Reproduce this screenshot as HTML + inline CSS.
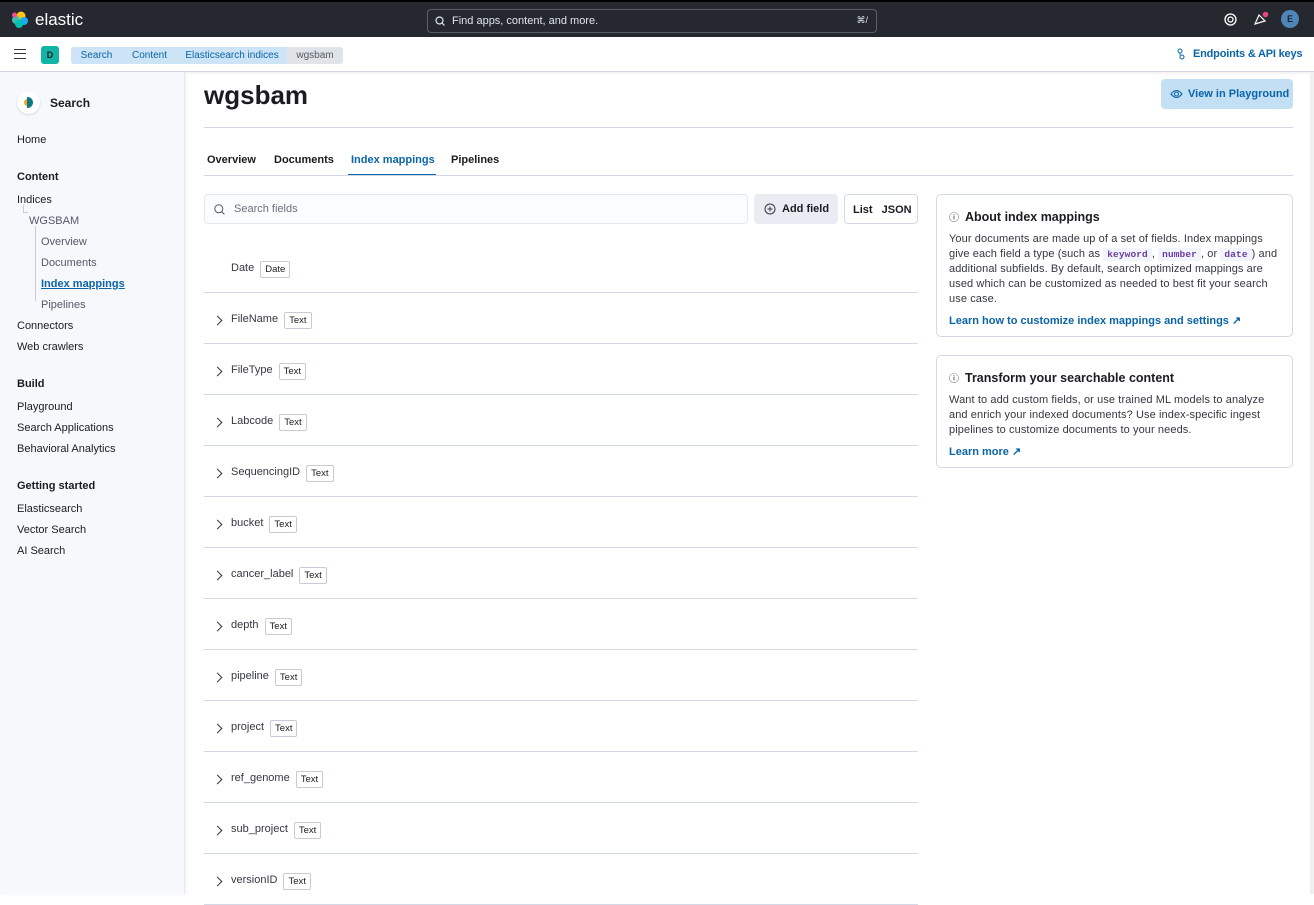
<!DOCTYPE html>
<html><head><meta charset="utf-8"><style>
*{box-sizing:border-box;margin:0;padding:0}
body{width:1314px;height:894px;overflow:hidden;font-family:"Liberation Sans",sans-serif;background:#fff;color:#1a1c21;position:relative;font-size:11px}
.top{position:absolute;left:0;top:0;width:1314px;height:37px;background:#25282f;border-top:2px solid #000}
.logo{position:absolute;left:11px;top:8px;display:flex;align-items:center;color:#fff;font-size:17px}
.search{position:absolute;left:427px;top:7px;width:450px;height:24px;border:1px solid #5a5e66;border-radius:4px;color:#dfe5ef;font-size:11px;padding:5px 0 0 24px}
.bc{position:absolute;left:0;top:37px;width:1314px;height:35px;background:#fff;border-bottom:1px solid #d3dae6;box-shadow:0 1px 3px rgba(0,0,0,.08)}
.crumb{position:absolute;top:10px;height:17px;font-size:10px;color:#0b64a8;background:#cce4f5;padding:3px 0 0 0;text-align:center}
.side{position:absolute;left:0;top:72px;width:185px;height:822px;background:#f7f8fc;border-right:1px solid #e3e8f0;box-shadow:1px 0 4px rgba(0,0,0,.06)}
.side div{position:absolute;font-size:11px;color:#1a1c21}
.side .h{font-weight:bold}
.side .sub{color:#535966}
.main{position:absolute;left:204px}
.row{position:absolute;left:204px;width:714px;height:51px;border-bottom:1px solid #d3dae6}
.row .n{position:absolute;left:27px;top:19px;font-size:11px;color:#343741}
.badge{display:inline-block;border:1px solid #c6ccd6;border-radius:2px;font-size:9.5px;padding:2px 4px;margin-left:6px;color:#1a1c21;vertical-align:-1px}
.chev{position:absolute;left:10px;top:24px;width:7px;height:7px;border-right:1.3px solid #343741;border-top:1.3px solid #343741;transform:rotate(45deg)}
.card{position:absolute;left:936px;width:357px;border:1px solid #d3dae6;border-radius:5px;padding:14px 14px 0 12px}
.card h3{font-size:12.5px;margin-bottom:8px}
.card p{font-size:11px;line-height:15px;color:#343741;letter-spacing:.1px}
.card a{display:block;color:#0b64a8;font-size:11px;font-weight:bold;margin-top:7px;text-decoration:none}
code{font-family:"Liberation Mono",monospace;font-size:9.5px;color:#6b3c9f;background:#f1f4fa;padding:1px 4px;font-weight:bold}
.tab{position:absolute;top:154px;font-size:11px;font-weight:bold}
</style></head><body>
<div class="top">
 <div class="logo"><svg width="18" height="18" viewBox="0 0 18 18"><circle cx="10" cy="5" r="4.5" fill="#fec514"/><circle cx="5" cy="9" r="4" fill="#3ebeb0"/><circle cx="13" cy="10" r="4" fill="#1ba9f5"/><circle cx="8" cy="13" r="4" fill="#00bfb3"/><circle cx="3.5" cy="4" r="2.5" fill="#f04e98"/></svg><span style="margin-left:6px">elastic</span></div>
 <div class="search"><svg style="position:absolute;left:7px;top:6px" width="10" height="10" viewBox="0 0 10 10"><circle cx="4.5" cy="4.5" r="3.5" fill="none" stroke="#dfe5ef" stroke-width="1.2"/><path d="M7 7l2.5 2.5" stroke="#dfe5ef" stroke-width="1.2"/></svg>Find apps, content, and more.<span style="position:absolute;right:8px;top:5px;font-size:9px">⌘/</span></div>
 <svg style="position:absolute;left:1224px;top:11px" width="13" height="13" viewBox="0 0 13 13"><circle cx="6.5" cy="6.5" r="5.5" fill="none" stroke="#fff" stroke-width="1.3"/><circle cx="6.5" cy="6.5" r="2.5" fill="none" stroke="#fff" stroke-width="1.3"/></svg>
 <svg style="position:absolute;left:1253px;top:9px" width="16" height="16" viewBox="0 0 16 16"><path d="M2 13L6 4l6 6z" fill="none" stroke="#fff" stroke-width="1.2"/><circle cx="12.5" cy="3.5" r="2.8" fill="#e2467b"/></svg>
 <div style="position:absolute;left:1281px;top:8px;width:18px;height:18px;border-radius:50%;background:#4e86b8;color:#000;font-size:9px;text-align:center;line-height:18px">E</div>
</div>
<div class="bc">
 <div style="position:absolute;left:14px;top:12px;width:12px;height:10px;border-top:1.5px solid #343741;border-bottom:1.5px solid #343741"><div style="margin-top:3px;border-top:1.5px solid #343741"></div></div>
 <div style="position:absolute;left:41px;top:9px;width:18px;height:18px;border-radius:3px;background:#12b5a5;font-size:9px;font-weight:bold;text-align:center;line-height:18px">D</div>
 <div class="crumb" style="left:71px;width:51px;border-radius:3px 0 0 3px">Search</div>
 <div class="crumb" style="left:122px;width:55px">Content</div>
 <div class="crumb" style="left:177px;width:110px">Elasticsearch indices</div>
 <div class="crumb" style="left:287px;width:56px;background:#e0e3e8;color:#535966;border-radius:0 3px 3px 0">wgsbam</div>
 <div style="position:absolute;left:1193px;top:11px;font-size:11px;font-weight:bold;color:#0b64a8;letter-spacing:-.2px">Endpoints &amp; API keys</div>
 <svg style="position:absolute;left:1176px;top:11px" width="10" height="13" viewBox="0 0 10 13"><circle cx="4" cy="3" r="2" fill="none" stroke="#0b64a8"/><circle cx="6" cy="9" r="2" fill="none" stroke="#0b64a8"/><path d="M4 5v2M6 7v0" stroke="#0b64a8"/></svg>
</div>
<div class="side">
 <div style="left:17px;top:19px;width:23px;height:23px;border-radius:50%;background:#fff;box-shadow:0 1px 2px rgba(0,0,0,.15)"><span style="position:absolute;left:7px;top:8px;width:7px;height:7px;border-radius:50%;background:#f6a623"></span><span style="position:absolute;left:10px;top:6px;width:6px;height:11px;border-radius:0 6px 6px 0;background:#0b7a82"></span></div>
 <div class="h" style="left:50px;top:24px;font-size:12px">Search</div>
 <div style="left:17px;top:62px">Home</div>
 <div class="h" style="left:17px;top:99px">Content</div>
 <div style="left:17px;top:122px">Indices</div>
 <div style="left:23px;top:133px;width:5px;height:8px;border-left:1px solid #c6ccd6;border-bottom:1px solid #c6ccd6"></div>
 <div class="sub" style="left:29px;top:143px">WGSBAM</div>
 <div style="left:35px;top:154px;width:1px;height:75px;background:#c6ccd6"></div>
 <div class="sub" style="left:41px;top:164px">Overview</div>
 <div class="sub" style="left:41px;top:185px">Documents</div>
 <div style="left:41px;top:206px;color:#0b64a8;font-weight:bold;text-decoration:underline">Index mappings</div>
 <div class="sub" style="left:41px;top:227px">Pipelines</div>
 <div style="left:17px;top:248px">Connectors</div>
 <div style="left:17px;top:269px">Web crawlers</div>
 <div class="h" style="left:17px;top:306px">Build</div>
 <div style="left:17px;top:329px">Playground</div>
 <div style="left:17px;top:350px">Search Applications</div>
 <div style="left:17px;top:371px">Behavioral Analytics</div>
 <div class="h" style="left:17px;top:408px">Getting started</div>
 <div style="left:17px;top:431px">Elasticsearch</div>
 <div style="left:17px;top:452px">Vector Search</div>
 <div style="left:17px;top:473px">AI Search</div>
</div>
<div class="main" style="top:80px;font-size:26px;font-weight:bold">wgsbam</div>
<div style="position:absolute;left:1161px;top:79px;width:132px;height:30px;background:#c2dff3;border-radius:4px;color:#0b64a8;font-size:11px;font-weight:bold;padding:9px 0 0 27px">View in Playground<svg style="position:absolute;left:9px;top:10px" width="13" height="10" viewBox="0 0 13 10"><path d="M1 5Q6.5-2 12 5Q6.5 12 1 5z" fill="none" stroke="#0b64a8" stroke-width="1.1"/><circle cx="6.5" cy="5" r="2" fill="none" stroke="#0b64a8" stroke-width="1.1"/></svg></div>
<div style="position:absolute;left:204px;top:127px;width:1089px;height:1px;background:#d3dae6"></div>
<div class="tab" style="left:207px">Overview</div>
<div class="tab" style="left:274px">Documents</div>
<div class="tab" style="left:351px;color:#0b64a8">Index mappings</div>
<div style="position:absolute;left:348px;top:174px;width:88px;height:2px;background:#0b64a8"></div>
<div class="tab" style="left:451px">Pipelines</div>
<div style="position:absolute;left:204px;top:175px;width:1089px;height:1px;background:#d3dae6"></div>
<div style="position:absolute;left:204px;top:194px;width:544px;height:30px;background:#fbfcfd;border:1px solid #e3e8f0;border-radius:4px;color:#69707d;font-size:11px;padding:8px 0 0 29px">Search fields<svg style="position:absolute;left:9px;top:9px" width="11" height="11" viewBox="0 0 11 11"><circle cx="4.8" cy="4.8" r="4" fill="none" stroke="#535966" stroke-width="1"/><path d="M7.6 7.6l2.8 2.8" stroke="#535966"/></svg></div>
<div style="position:absolute;left:754px;top:194px;width:84px;height:30px;background:#e9edf3;border-radius:4px;font-size:11px;font-weight:bold;padding:9px 0 0 28px">Add field<svg style="position:absolute;left:10px;top:9px" width="12" height="12" viewBox="0 0 12 12"><circle cx="6" cy="6" r="5" fill="none" stroke="#343741"/><path d="M6 3.5v5M3.5 6h5" stroke="#343741"/></svg></div>
<div style="position:absolute;left:844px;top:194px;width:74px;height:30px;border:1px solid #d3dae6;border-radius:4px;font-size:11px;font-weight:bold;padding:9px 0 0 8px">List <span style="margin-left:6px">JSON</span></div>
<div class="row" style="top:242px"><span class="n">Date<span class="badge">Date</span></span></div>
<div class="row" style="top:293px"><i class="chev"></i><span class="n">FileName<span class="badge">Text</span></span></div>
<div class="row" style="top:344px"><i class="chev"></i><span class="n">FileType<span class="badge">Text</span></span></div>
<div class="row" style="top:395px"><i class="chev"></i><span class="n">Labcode<span class="badge">Text</span></span></div>
<div class="row" style="top:446px"><i class="chev"></i><span class="n">SequencingID<span class="badge">Text</span></span></div>
<div class="row" style="top:497px"><i class="chev"></i><span class="n">bucket<span class="badge">Text</span></span></div>
<div class="row" style="top:548px"><i class="chev"></i><span class="n">cancer_label<span class="badge">Text</span></span></div>
<div class="row" style="top:599px"><i class="chev"></i><span class="n">depth<span class="badge">Text</span></span></div>
<div class="row" style="top:650px"><i class="chev"></i><span class="n">pipeline<span class="badge">Text</span></span></div>
<div class="row" style="top:701px"><i class="chev"></i><span class="n">project<span class="badge">Text</span></span></div>
<div class="row" style="top:752px"><i class="chev"></i><span class="n">ref_genome<span class="badge">Text</span></span></div>
<div class="row" style="top:803px"><i class="chev"></i><span class="n">sub_project<span class="badge">Text</span></span></div>
<div class="row" style="top:854px"><i class="chev"></i><span class="n">versionID<span class="badge">Text</span></span></div>
<div class="card" style="top:194px;height:143px">
 <h3><span style="font-weight:normal;font-size:10px;margin-right:6px">ⓘ</span>About index mappings</h3>
 <p>Your documents are made up of a set of fields. Index mappings give each field a type (such as <code>keyword</code>, <code>number</code>, or <code>date</code>) and additional subfields. By default, search optimized mappings are used which can be customized as needed to best fit your search use case.</p>
 <a>Learn how to customize index mappings and settings ↗</a>
</div>
<div class="card" style="top:355px;height:113px">
 <h3><span style="font-weight:normal;font-size:10px;margin-right:6px">ⓘ</span>Transform your searchable content</h3>
 <p>Want to add custom fields, or use trained ML models to analyze and enrich your indexed documents? Use index-specific ingest pipelines to customize documents to your needs.</p>
 <a>Learn more ↗</a>
</div>
<div style="position:absolute;left:1310px;top:72px;width:4px;height:822px;background:#f0f0f0"></div>
</body></html>
